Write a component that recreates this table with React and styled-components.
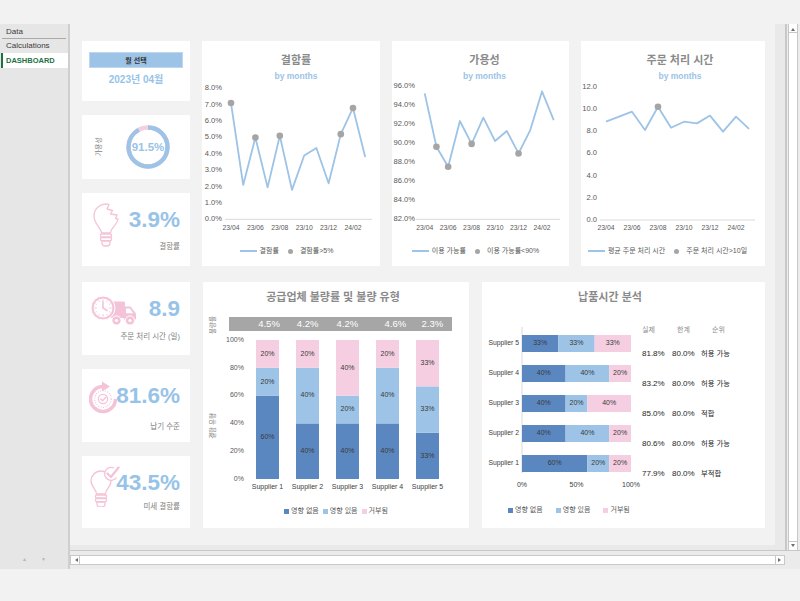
import React from "react";
import styled, { createGlobalStyle } from "styled-components";

const BLUE = "#9dc3e6";
const DARK = "#5b87c0";
const PINK = "#f5cfe1";
const ICON = "#f4c3d7";
const VALUE = "#98c3e8";
const GREY_TEXT = "#7f7f7f";
const AXIS_TEXT = "#595959";
const DOT = "#a5a5a5";

const MONTHS = ["23/04", "23/05", "23/06", "23/07", "23/08", "23/09", "23/10", "23/11", "23/12", "24/01", "24/02", "24/03"];

const LINE_CHARTS = [
  {
    title: "결함률", w: 178, shift: 10, legendPad: 9, line: "결함률", dot: "결함률>5%",
    data: [7.1, 2.1, 5.0, 1.95, 5.1, 1.8, 3.9, 4.35, 2.2, 5.2, 6.8, 3.8],
    min: 0, max: 8, step: 1, yTop: 5.3, yBot: 136.3, labelRight: 20, axis: [23, 170], x0: 29, dx: 12.2,
    fmt: (v) => v.toFixed(1) + "%", isDot: (v) => v >= 5,
  },
  {
    title: "가용성", w: 177, shift: 8, legendPad: 10, line: "이용 가능률", dot: "이용 가능률<90%",
    data: [95.2, 89.6, 87.5, 92.3, 89.9, 92.65, 90.2, 91.25, 88.9, 91.35, 95.4, 92.4],
    min: 82, max: 96, step: 2, yTop: 2.7, yBot: 136.3, labelRight: 23, axis: [24, 168], x0: 32.7, dx: 11.73,
    fmt: (v) => v.toFixed(1) + "%", isDot: (v) => v < 90,
  },
  {
    title: "주문 처리 시간", w: 184, shift: 14, legendPad: 11, line: "평균 주문 처리 시간", dot: "주문 처리 시간>10일",
    data: [8.85, 9.3, 9.75, 8.1, 10.2, 8.3, 8.85, 8.7, 9.4, 7.95, 9.3, 8.2],
    min: 0, max: 12, step: 2, yTop: 3.7, yBot: 137, labelRight: 16, axis: [19, 174], x0: 25, dx: 13,
    fmt: (v) => v.toFixed(1), isDot: (v) => v > 10,
  },
];

const SUPPLIERS = [
  { name: "Supplier 1", rate: "4.5%", bandX: 66, parts: [60, 20, 20] },
  { name: "Supplier 2", rate: "4.2%", bandX: 104.7, parts: [40, 40, 20] },
  { name: "Supplier 3", rate: "4.2%", bandX: 144.3, parts: [40, 20, 40] },
  { name: "Supplier 4", rate: "4.6%", bandX: 192.3, parts: [40, 40, 20] },
  { name: "Supplier 5", rate: "2.3%", bandX: 229.3, parts: [33.33, 33.33, 33.34] },
];

const DELIVERY = [
  { name: "Supplier 5", parts: [33.33, 33.33, 33.34], actual: "81.8%", limit: "80.0%", status: "허용 가능" },
  { name: "Supplier 4", parts: [40, 40, 20], actual: "83.2%", limit: "80.0%", status: "허용 가능" },
  { name: "Supplier 3", parts: [40, 20, 40], actual: "85.0%", limit: "80.0%", status: "적합" },
  { name: "Supplier 2", parts: [40, 40, 20], actual: "80.6%", limit: "80.0%", status: "허용 가능" },
  { name: "Supplier 1", parts: [60, 20, 20], actual: "77.9%", limit: "80.0%", status: "부적합" },
];

const SEG_COLORS = [DARK, BLUE, PINK];
const SEG_NAMES = ["영향 없음", "영향 있음", "거부됨"];

const GlobalStyle = createGlobalStyle`
  * { box-sizing: border-box; }
  body {
    margin: 0;
    background: #f2f2f2;
    font-family: "Liberation Sans", "Noto Sans CJK KR", sans-serif;
  }
`;

const Window = styled.div`
  width: 800px;
  height: 601px;
  display: flex;
  flex-direction: column;
  background: #f2f2f2;
  overflow: hidden;
`;
const TopBand = styled.div`
  height: 24px;
  flex: none;
`;
const Body = styled.div`
  height: 545px;
  flex: none;
  display: flex;
`;

const Sidebar = styled.div`
  width: 70px;
  flex: none;
  background: #e6e6e6;
  border-right: 2px solid #cfcfcf;
  display: flex;
  flex-direction: column;
`;
const SheetTab = styled.div`
  height: ${({ $h }) => $h}px;
  display: flex;
  align-items: center;
  margin: 0 2px 0 2px;
  padding-left: 4px;
  font-size: 8px;
  color: #3b3b3b;
  border-bottom: 1px solid ${({ $line }) => ($line ? "#a9a9a9" : "transparent")};
`;
const ActiveTab = styled.div`
  height: 15px;
  display: flex;
  align-items: center;
  margin-left: 1px;
  padding-left: 3px;
  background: #fff;
  border-left: 2px solid #1e7145;
  color: #1e7145;
  font-size: 7.5px;
  font-weight: 700;
`;
const SideFooter = styled.div`
  margin-top: auto;
  height: 20px;
  display: flex;
  align-items: center;
  gap: 14px;
  padding-left: 22px;
`;
const Spin = styled.span`
  font-size: 5px;
  color: #b5b5b5;
`;

const Main = styled.div`
  flex: 1;
  display: flex;
  flex-direction: column;
`;
const SheetRow = styled.div`
  height: 527px;
  display: flex;
  border-bottom: 1px solid #c8c8c8;
`;
const Sheet = styled.div`
  flex: 1;
  background: #f2f2f2;
  border-right: 10px solid #e9e9e9;
  border-bottom: 5px solid #e9e9e9;
  padding: 17px 0 0 12px;
  overflow: hidden;
`;
const VScroll = styled.div`
  width: 15px;
  flex: none;
  background: #ececec;
  border-left: 2px solid #c8c8c8;
  padding-left: 1px;
`;
const VTrack = styled.div`
  width: 10px;
  height: 100%;
  background: #fff;
  border-left: 1px solid #c8c8c8;
  border-right: 1px solid #c8c8c8;
  display: flex;
  flex-direction: column;
  justify-content: space-between;
`;
const ArrowBox = styled.div`
  width: ${({ $w }) => $w || "100%"};
  height: ${({ $h }) => $h || "100%"};
  flex: none;
  display: flex;
  align-items: center;
  justify-content: center;
  background: #fff;
  border-color: #c8c8c8;
  border-style: solid;
  border-width: ${({ $edge }) => $edge};
`;
const Tri = styled.span`
  width: 0;
  height: 0;
  border: 2.5px solid transparent;
  ${({ $dir }) => `border-${$dir}: 3px solid #6e6e6e;`}
  ${({ $dir }) => ($dir === "bottom" ? "border-top: 0; margin-top: 2px;" : "")}
  ${({ $dir }) => ($dir === "top" ? "border-bottom: 0; margin-bottom: 2px;" : "")}
`;
const HScrollRow = styled.div`
  height: 18px;
  flex: none;
  background: #ebebeb;
  padding: 4px 15px 0 0;
`;
const HTrack = styled.div`
  height: 10px;
  background: #fff;
  border: 1px solid #c8c8c8;
  display: flex;
  justify-content: space-between;
`;

const Board = styled.div`
  display: flex;
  flex-direction: column;
  gap: 16px;
`;
const Row = styled.div`
  display: flex;
  gap: ${({ $gap }) => $gap}px;
`;
const Stack = styled.div`
  width: 108px;
  flex: none;
  display: flex;
  flex-direction: column;
  gap: 14px;
`;
const Card = styled.div`
  background: #fff;
  flex: none;
  width: ${({ $w }) => ($w ? `${$w}px` : "auto")};
  height: ${({ $h }) => ($h ? `${$h}px` : "auto")};
`;

const MonthCard = styled(Card)`
  padding: 11px 7px 0;
  display: flex;
  flex-direction: column;
  align-items: stretch;
`;
const MonthBar = styled.div`
  height: 16px;
  background: ${BLUE};
  border: 1px solid #bdd7ee;
  display: flex;
  align-items: center;
  justify-content: center;
  font-size: 7px;
  font-weight: 700;
  color: #333;
`;
const MonthValue = styled.div`
  margin-top: 5px;
  text-align: center;
  font-size: 10px;
  line-height: 14px;
  font-weight: 700;
  color: ${VALUE};
`;

const DonutCard = styled(Card)`
  display: flex;
  align-items: center;
  padding-left: 11px;
  gap: 22px;
`;
const SideLabel = styled.div`
  writing-mode: vertical-rl;
  text-orientation: sideways;
  transform: rotate(180deg);
  font-size: 7px;
  color: ${GREY_TEXT};
`;
const DonutWrap = styled.div`
  display: grid;
  place-items: center;
  & > * {
    grid-area: 1 / 1;
  }
`;
const DonutText = styled.div`
  font-size: 11.5px;
  font-weight: 700;
  color: ${VALUE};
`;

const KpiBox = styled(Card)`
  padding: 10px 10px 0 0;
  display: flex;
  flex-direction: column;
`;
const KpiTop = styled.div`
  height: 34px;
  display: flex;
  align-items: center;
`;
const IconWrap = styled.div`
  flex: none;
  align-self: flex-start;
  display: flex;
  margin-top: ${({ $top }) => $top}px;
  margin-left: ${({ $left }) => $left}px;
  margin-right: -12px;
`;
const KpiValue = styled.div`
  flex: none;
  margin-left: auto;
  font-size: 22.5px;
  line-height: 1;
  font-weight: 700;
  color: ${VALUE};
`;
const KpiLabel = styled.div`
  margin-top: ${({ $gap }) => $gap}px;
  text-align: right;
  font-size: 7.5px;
  line-height: 10px;
  color: ${GREY_TEXT};
`;

const ChartCard = styled(Card)`
  padding-top: ${({ $top }) => $top}px;
  display: flex;
  flex-direction: column;
`;
const ChartTitle = styled.div`
  font-size: 11px;
  line-height: 14px;
  font-weight: 700;
  color: #8a8a8a;
  text-align: center;
  padding-left: ${({ $l }) => $l || 0}px;
  padding-right: ${({ $r }) => $r || 0}px;
`;
const SubTitle = styled.div`
  margin-top: 4px;
  font-size: 8.5px;
  line-height: 11px;
  font-weight: 700;
  color: ${BLUE};
  text-align: center;
  padding-left: ${({ $l }) => $l || 0}px;
`;
const Plot = styled.svg`
  display: block;
  flex: none;
  margin-top: ${({ $mt }) => $mt || 0}px;
  overflow: visible;
`;
const Legend = styled.div`
  display: flex;
  align-items: center;
  justify-content: ${({ $start }) => ($start ? "flex-start" : "center")};
  gap: ${({ $gap }) => $gap}px;
  margin-top: ${({ $mt }) => $mt}px;
  padding-left: ${({ $l }) => $l || 0}px;
  padding-right: ${({ $r }) => $r || 0}px;
  font-size: 7px;
  line-height: 10px;
  color: ${AXIS_TEXT};
`;
const LegendItem = styled.div`
  display: flex;
  align-items: center;
  gap: ${({ $gap }) => $gap}px;
  white-space: nowrap;
`;
const LineSwatch = styled.span`
  width: 17px;
  height: 2px;
  background: ${BLUE};
`;
const DotSwatch = styled.span`
  width: 5px;
  height: 5px;
  border-radius: 50%;
  background: ${DOT};
`;
const SquareSwatch = styled.span`
  width: 5px;
  height: 5px;
  background: ${({ $c }) => $c};
`;

const DeliveryBody = styled.div`
  display: flex;
  margin-top: 5px;
`;
const Table = styled.div`
  display: grid;
  grid-template-columns: 30px 29px 42px;
  grid-template-rows: 13px repeat(5, 30px);
  padding-top: 16px;
  align-items: center;
  color: #262626;
`;
const HeadCell = styled.div`
  align-self: start;
  padding-left: ${({ $l }) => $l}px;
  font-size: 7px;
  line-height: 10px;
  color: #8c8c8c;
`;
const Cell = styled.div`
  font-size: ${({ $small }) => ($small ? "7.3px" : "8px")};
  white-space: nowrap;
`;

const bulbOutline = (cx, cy, r) =>
  `M${cx - 4.5} ${cy + r + 3} C${cx - 4.5} ${cy + r - 1.5} ${cx - r} ${cy + 5.5} ${cx - r} ${cy} ` +
  `A${r} ${r} 0 0 1 ${cx + r} ${cy} C${cx + r} ${cy + 5.5} ${cx + 4.5} ${cy + r - 1.5} ${cx + 4.5} ${cy + r + 3} Z`;

const BulbBase = ({ x, y, w }) => (
  <>
    <rect x={x} y={y} width={w} height="3" rx="1" />
    <rect x={x} y={y + 3.6} width={w} height="3" rx="1" />
    <path d={`M${x + 1.5} ${y + 7.2} h${w - 3} v1.8 a3 3 0 0 1 -3 3 h${-(w - 9)} a3 3 0 0 1 -3 -3 z`} />
  </>
);

const BrokenBulbIcon = () => (
  <svg width="29" height="46" viewBox="0 0 29 46" fill="none" stroke={ICON} strokeWidth="1.3" strokeLinejoin="round">
    <path d="M8.5 31 C8.5 26.5 1 22 1 14 A12 12 0 0 1 16 2.4 L14 7 L19.5 8.5 L17.5 12 L24 13 L22.5 16.5 L25 17 C24 23 17.5 26.5 17.5 31 Z" />
    <BulbBase x={7.5} y={32} w={11} />
  </svg>
);

const CheckBulbIcon = () => (
  <svg width="30" height="42" viewBox="0 0 30 42" fill="none" stroke={ICON} strokeWidth="1.3" strokeLinejoin="round">
    <path d={bulbOutline(11, 16, 10)} />
    <BulbBase x={5.5} y={30} w={11} />
    <circle cx="21.5" cy="8.5" r="6.5" fill="#fff" stroke="none" />
    <path d="M26.5 12.5 A6.5 6.5 0 1 1 24 3" />
    <path d="M17.5 8.5 L21 12 L28.5 2.5" strokeWidth="2.3" strokeLinecap="round" />
  </svg>
);

const CycleCheckIcon = () => (
  <svg width="28" height="34" viewBox="0 0 28 34" fill="none" stroke={ICON}>
    <path d="M14 5.5 A12.5 12.5 0 1 0 26.5 18" strokeWidth="3.6" />
    <path d="M13 0.5 L21 5.5 L13 10.5 Z" fill={ICON} stroke="none" />
    <circle cx="14" cy="18" r="8.3" strokeWidth="1.3" strokeDasharray="0.9 1.5" />
    <circle cx="14" cy="18" r="4.6" strokeWidth="1.2" />
    <path d="M11.8 18 L13.6 19.8 L17 16" strokeWidth="1.3" strokeLinecap="round" />
  </svg>
);

const TruckClockIcon = () => {
  const ticks = Array.from({ length: 12 }, (_, i) => {
    const a = (i * Math.PI) / 6;
    const r0 = i % 3 === 0 ? 6.2 : 7.2;
    return (
      <line
        key={i}
        x1={12 + Math.sin(a) * r0}
        y1={13 - Math.cos(a) * r0}
        x2={12 + Math.sin(a) * 8.6}
        y2={13 - Math.cos(a) * 8.6}
        stroke={ICON}
        strokeWidth="1"
      />
    );
  });
  return (
    <svg width="46" height="31" viewBox="0 0 46 31">
      <rect x="19" y="6.5" width="15" height="16.5" rx="1" fill={ICON} />
      <path d="M33 11.5 h6.5 l5.5 7 v6 h-12 z" fill={ICON} />
      <path d="M35 13.5 h3.8 l3.4 4.8 h-7.2 z" fill="#fff" />
      <circle cx="25.5" cy="25.5" r="4.6" fill={ICON} stroke="#fff" strokeWidth="1" />
      <circle cx="25.5" cy="25.5" r="1.6" fill="#fff" />
      <circle cx="39" cy="25.5" r="4.6" fill={ICON} stroke="#fff" strokeWidth="1" />
      <circle cx="39" cy="25.5" r="1.6" fill="#fff" />
      <circle cx="12" cy="13" r="12" fill={ICON} stroke="#fff" strokeWidth="1" />
      <circle cx="12" cy="13" r="9.4" fill="#fff" />
      {ticks}
      <path d="M12 7 V13 L16 15.5" stroke={ICON} strokeWidth="1.6" fill="none" strokeLinecap="round" />
    </svg>
  );
};

const Donut = ({ value }) => {
  const r = 19.5;
  const c = 2 * Math.PI * r;
  return (
    <DonutWrap>
      <svg width="46" height="46" viewBox="0 0 46 46">
        <circle cx="23" cy="23" r={r} fill="none" stroke={PINK} strokeWidth="4.4" />
        <circle
          cx="23"
          cy="23"
          r={r}
          fill="none"
          stroke={BLUE}
          strokeWidth="4.4"
          strokeDasharray={`${(c * value) / 100} ${c}`}
          transform="rotate(-90 23 23)"
        />
      </svg>
      <DonutText>{value}%</DonutText>
    </DonutWrap>
  );
};

const KpiCard = ({ h, icon, top, left, value, label, labelGap }) => (
  <KpiBox $h={h}>
    <KpiTop>
      <IconWrap $top={top} $left={left}>{icon}</IconWrap>
      <KpiValue>{value}</KpiValue>
    </KpiTop>
    <KpiLabel $gap={labelGap}>{label}</KpiLabel>
  </KpiBox>
);

const LineChart = ({ chart }) => {
  const { w, data, min, max, step, yTop, yBot, labelRight, axis, x0, dx, fmt, isDot } = chart;
  const n = Math.round((max - min) / step);
  const ticks = Array.from({ length: n + 1 }, (_, i) => min + i * step);
  const yOf = (v) => yBot - ((v - min) / (max - min)) * (yBot - yTop);
  const pts = data.map((v, i) => [x0 + i * dx, yOf(v)]);
  return (
    <Plot width={w} height="152" $mt={1}>
      {ticks.map((t) => (
        <text key={t} x={labelRight} y={yOf(t)} textAnchor="end" dominantBaseline="middle" fontSize="7.6" fill={AXIS_TEXT}>
          {fmt(t)}
        </text>
      ))}
      <line x1={axis[0]} x2={axis[1]} y1={yBot} y2={yBot} stroke="#d9d9d9" strokeWidth="1" />
      <polyline
        points={pts.map((p) => p.join(",")).join(" ")}
        fill="none"
        stroke={BLUE}
        strokeWidth="1.8"
        strokeLinejoin="round"
      />
      {pts.map(([x, y], i) => (isDot(data[i]) ? <circle key={i} cx={x} cy={y} r="3.3" fill={DOT} /> : null))}
      {MONTHS.map((m, i) =>
        i % 2 === 0 ? (
          <text key={m} x={x0 + i * dx} y="145" textAnchor="middle" dominantBaseline="middle" fontSize="6.8" fill={AXIS_TEXT}>
            {m}
          </text>
        ) : null
      )}
    </Plot>
  );
};

const LineCard = ({ chart }) => (
  <ChartCard $w={chart.w} $top={12}>
    <ChartTitle $l={chart.shift}>{chart.title}</ChartTitle>
    <SubTitle $l={chart.shift}>by months</SubTitle>
    <LineChart chart={chart} />
    <Legend $gap={9} $mt={11} $r={chart.legendPad}>
      <LegendItem $gap={3}>
        <LineSwatch />
        {chart.line}
      </LegendItem>
      <LegendItem $gap={7}>
        <DotSwatch />
        {chart.dot}
      </LegendItem>
    </Legend>
  </ChartCard>
);

const SegmentLegend = (props) => (
  <Legend {...props}>
    {SEG_NAMES.map((name, i) => (
      <LegendItem key={name} $gap={2}>
        <SquareSwatch $c={SEG_COLORS[i]} />
        {name}
      </LegendItem>
    ))}
  </Legend>
);

const StackChart = () => {
  const top = 31;
  const bot = 170;
  const h = bot - top;
  return (
    <Plot width="266" height="185" $mt={5}>
      <rect x="26" y="8" width="223" height="14" fill="#a6a6a6" />
      {SUPPLIERS.map((s) => (
        <text key={s.name} x={s.bandX} y="15.5" textAnchor="middle" dominantBaseline="middle" fontSize="9.5" fill="#fff">
          {s.rate}
        </text>
      ))}
      <text transform="translate(10 16) rotate(-90)" textAnchor="middle" dominantBaseline="middle" fontSize="6.5" fill={GREY_TEXT}>
        불량률
      </text>
      <text transform="translate(10 117) rotate(-90)" textAnchor="middle" dominantBaseline="middle" fontSize="6.5" fill={GREY_TEXT}>
        결함 유형
      </text>
      {[0, 20, 40, 60, 80, 100].map((t) => (
        <text key={t} x="41" y={bot - (t / 100) * h} textAnchor="end" dominantBaseline="middle" fontSize="7" fill={AXIS_TEXT}>
          {t}%
        </text>
      ))}
      {SUPPLIERS.map((s, i) => {
        const x = 53 + i * 40;
        let y = bot;
        return (
          <g key={s.name}>
            {s.parts.map((p, j) => {
              const sh = (p / 100) * h;
              y -= sh;
              return (
                <g key={j}>
                  <rect x={x} y={y} width="23" height={sh} fill={SEG_COLORS[j]} />
                  <text x={x + 11.5} y={y + sh / 2} textAnchor="middle" dominantBaseline="middle" fontSize="7" fill="#3a3a3a">
                    {Math.round(p)}%
                  </text>
                </g>
              );
            })}
            <text x={x + 11.5} y="178" textAnchor="middle" dominantBaseline="middle" fontSize="7" fill="#404040">
              {s.name}
            </text>
          </g>
        );
      })}
    </Plot>
  );
};

const DeliveryChart = () => (
  <Plot width="160" height="185">
    <line x1="40" x2="40" y1="18" y2="164" stroke="#d9d9d9" strokeWidth="1" />
    {DELIVERY.map((d, i) => {
      const cy = 34.5 + i * 30;
      let x = 40;
      return (
        <g key={d.name}>
          <text x="37" y={cy} textAnchor="end" dominantBaseline="middle" fontSize="6.8" fill="#404040">
            {d.name}
          </text>
          {d.parts.map((p, j) => {
            const w = (p / 100) * 109;
            const el = (
              <g key={j}>
                <rect x={x} y={cy - 8.5} width={w} height="17" fill={SEG_COLORS[j]} />
                <text x={x + w / 2} y={cy} textAnchor="middle" dominantBaseline="middle" fontSize="7" fill="#3a3a3a">
                  {Math.round(p)}%
                </text>
              </g>
            );
            x += w;
            return el;
          })}
        </g>
      );
    })}
    {["0%", "50%", "100%"].map((t, i) => (
      <text key={t} x={40 + i * 54.5} y="176" textAnchor="middle" dominantBaseline="middle" fontSize="7" fill="#404040">
        {t}
      </text>
    ))}
  </Plot>
);

export default function App() {
  return (
    <>
      <GlobalStyle />
      <Window>
        <TopBand />
        <Body>
          <Sidebar>
            <SheetTab $h={15} $line>Data</SheetTab>
            <SheetTab $h={14}>Calculations</SheetTab>
            <ActiveTab>DASHBOARD</ActiveTab>
            <SideFooter>
              <Spin>▲</Spin>
              <Spin>▼</Spin>
            </SideFooter>
          </Sidebar>
          <Main>
            <SheetRow>
              <Sheet>
                <Board>
                  <Row $gap={12}>
                    <Stack>
                      <MonthCard $h={60}>
                        <MonthBar>월 선택</MonthBar>
                        <MonthValue>2023년 04월</MonthValue>
                      </MonthCard>
                      <DonutCard $h={64}>
                        <SideLabel>가용성</SideLabel>
                        <Donut value={91.5} />
                      </DonutCard>
                      <KpiCard h={73} icon={<BrokenBulbIcon />} top={-1} left={11} value="3.9%" label="결함률" labelGap={5} />
                    </Stack>
                    {LINE_CHARTS.map((c) => (
                      <LineCard key={c.title} chart={c} />
                    ))}
                  </Row>
                  <Row $gap={13}>
                    <Stack>
                      <KpiCard h={73} icon={<TruckClockIcon />} top={3} left={9} value="8.9" label="주문 처리 시간 (일)" labelGap={6} />
                      <KpiCard h={73} icon={<CycleCheckIcon />} top={2} left={7} value="81.6%" label="납기 수준" labelGap={9} />
                      <KpiCard h={72} icon={<CheckBulbIcon />} top={-1} left={8} value="43.5%" label="미세 결함률" labelGap={2} />
                    </Stack>
                    <ChartCard $w={266} $top={8}>
                      <ChartTitle $r={6}>공급업체 불량률 및 불량 유형</ChartTitle>
                      <StackChart />
                      <SegmentLegend $gap={4} $mt={12} />
                    </ChartCard>
                    <ChartCard $w={283} $top={8}>
                      <ChartTitle $r={27}>납품시간 분석</ChartTitle>
                      <DeliveryBody>
                        <DeliveryChart />
                        <Table>
                          <HeadCell $l={0}>실제</HeadCell>
                          <HeadCell $l={5}>한계</HeadCell>
                          <HeadCell $l={11}>순위</HeadCell>
                          {DELIVERY.map((d) => (
                            <React.Fragment key={d.name}>
                              <Cell>{d.actual}</Cell>
                              <Cell>{d.limit}</Cell>
                              <Cell $small>{d.status}</Cell>
                            </React.Fragment>
                          ))}
                        </Table>
                      </DeliveryBody>
                      <SegmentLegend $gap={13} $mt={11} $l={26} $start />
                    </ChartCard>
                  </Row>
                </Board>
              </Sheet>
              <VScroll>
                <VTrack>
                  <ArrowBox $h="9px" $edge="0 0 1px 0">
                    <Tri $dir="bottom" />
                  </ArrowBox>
                  <ArrowBox $h="9px" $edge="1px 0 0 0">
                    <Tri $dir="top" />
                  </ArrowBox>
                </VTrack>
              </VScroll>
            </SheetRow>
            <HScrollRow>
              <HTrack>
                <ArrowBox $w="9px" $edge="0 1px 0 0">
                  <Tri $dir="right" />
                </ArrowBox>
                <ArrowBox $w="9px" $edge="0 0 0 1px">
                  <Tri $dir="left" />
                </ArrowBox>
              </HTrack>
            </HScrollRow>
          </Main>
        </Body>
      </Window>
    </>
  );
}
